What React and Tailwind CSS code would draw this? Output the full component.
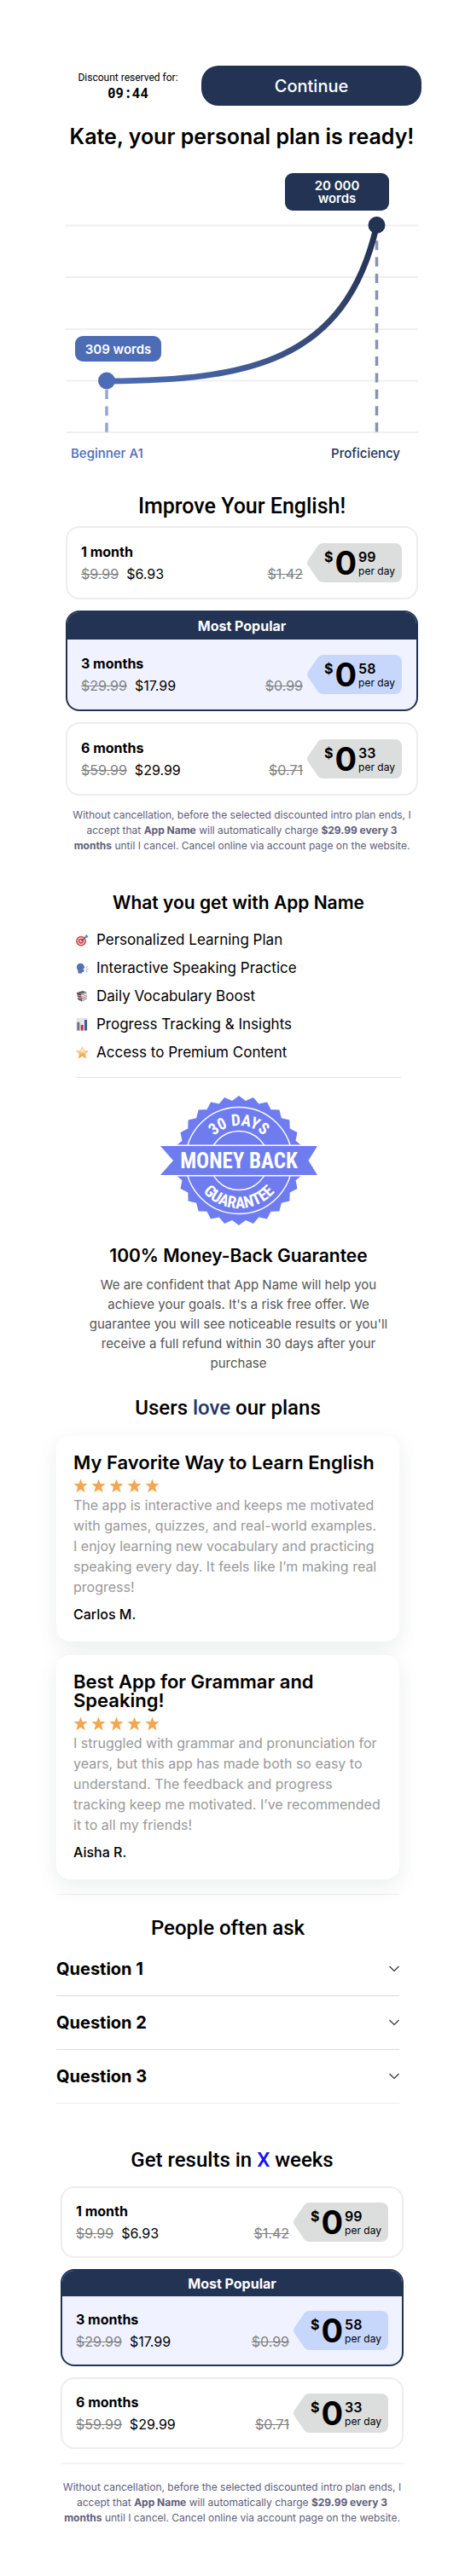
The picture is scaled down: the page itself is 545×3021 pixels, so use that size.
import React from 'react';

const PLANS = [
  { name: '1 month', was: '$9.99', now: '$6.93', dayWas: '$1.42', cents: '99' },
  { name: '3 months', was: '$29.99', now: '$17.99', dayWas: '$0.99', cents: '58', popular: true },
  { name: '6 months', was: '$59.99', now: '$29.99', dayWas: '$0.71', cents: '33' },
];

const REVIEWS = [
  {
    title: 'My Favorite Way to Learn English',
    text: 'The app is interactive and keeps me motivated with games, quizzes, and real-world examples. I enjoy learning new vocabulary and practicing speaking every day. It feels like I’m making real progress!',
    author: 'Carlos M.',
  },
  {
    title: 'Best App for Grammar and Speaking!',
    text: 'I struggled with grammar and pronunciation for years, but this app has made both so easy to understand. The feedback and progress tracking keep me motivated. I’ve recommended it to all my friends!',
    author: 'Aisha R.',
  },
];

function TargetIcon() {
  return (
    <svg viewBox="0 0 15 15" className="size-[15px] shrink-0" aria-hidden="true">
      <circle cx="6" cy="8.6" r="5.9" fill="#c9433f" />
      <circle cx="6" cy="8.6" r="4.3" fill="#f3dedd" />
      <circle cx="6" cy="8.6" r="3.1" fill="#c9433f" />
      <circle cx="6" cy="8.6" r="1.5" fill="#f3dedd" />
      <path d="M6 8.6 12 3.4" stroke="#3f4f80" strokeWidth="1.1" />
      <path d="M10.4 4.8 10.8 2.4 13 .8 13.2 2.4 14.8 2.8 13 4.8Z" fill="#5f7fc4" />
    </svg>
  );
}

function SpeakingIcon() {
  return (
    <svg viewBox="0 0 15 15" className="size-[15px] shrink-0" aria-hidden="true">
      <path
        d="M5.600 1.800C2.600 1.800.8 3.800.9 6.400c.1 2 1.200 2.800 1.500 4.200l.2 3h4.500l.2-1.700c1.500.2 2.300-.1 2.300-1.300l-.1-1.200-1.700-.6 1.900-.9-.1-1c.6-.1.9-.4.6-.9L9.400 5C9 2.900 7.600 1.800 5.600 1.800Z"
        fill="#5471b4"
      />
      <path d="M11.600 7.200 14 5.200M12 8.700h2.500M11.600 10.200 13.800 12" stroke="#7f97c8" strokeWidth=".9" />
    </svg>
  );
}

function BooksIcon() {
  return (
    <svg viewBox="0 0 15 15" className="size-[15px] shrink-0" aria-hidden="true">
      <path d="M1 3 8 1l4.500 1.400L6 4.800Z" fill="#5c6067" />
      <path d="M1 3 6 4.800v2L1.200 5.200Z" fill="#43474e" />
      <path d="M6 4.800l6.500-2.400v2L6 6.800Z" fill="#a9adb3" />
      <path d="M1.600 5.800 6.500 7.400l6.500-2v2.200L6.500 10 1.600 8Z" fill="#c0413d" />
      <path d="M6.500 8l6.300-2v1.200L6.500 9.300Z" fill="#eceef0" />
      <path d="M2 8.800l5 1.800 6-2.200v2.200L7 13.600l-4.500-2Z" fill="#54617d" />
      <path d="M7 11.200l6-2.200v1.300L7 12.700Z" fill="#dfe2e6" />
    </svg>
  );
}

function ChartIcon() {
  return (
    <svg viewBox="0 0 15 15" className="size-[15px] shrink-0" aria-hidden="true">
      <path d="M.5 0h13v14.500H.5Z" fill="#e3e6eb" />
      <path d="M1.300 4.800h3v9.700h-3Z" fill="#6f747c" />
      <path d="M5.700 8h3v6.500h-3Z" fill="#b8383d" />
      <path d="M10 2h3v12.500h-3Z" fill="#3d5aa6" />
    </svg>
  );
}

function StarIcon() {
  return (
    <svg viewBox="0 0 15 15" className="size-[15px] shrink-0" aria-hidden="true">
      <defs>
        <linearGradient id="star-fill" x1="0" y1="0" x2="0" y2="1">
          <stop offset=".3" stopColor="#fbf3e6" />
          <stop offset=".65" stopColor="#f0ae55" />
        </linearGradient>
      </defs>
      <path
        d="M7.500 1 9.400 5.200 14.300 5.700 10.700 9 11.700 13.900 7.500 11.500 3.300 13.900 4.300 9 .7 5.700 5.600 5.200Z"
        fill="url(#star-fill)"
        stroke="#f0b25e"
        strokeWidth=".8"
        strokeLinejoin="round"
      />
    </svg>
  );
}

const BENEFITS = [
  { icon: TargetIcon, label: 'Personalized Learning Plan' },
  { icon: SpeakingIcon, label: 'Interactive Speaking Practice' },
  { icon: BooksIcon, label: 'Daily Vocabulary Boost' },
  { icon: ChartIcon, label: 'Progress Tracking & Insights' },
  { icon: StarIcon, label: 'Access to Premium Content' },
];

function GrowthChart() {
  return (
    <svg viewBox="0 0 413 320" className="mt-[19px] block w-full" role="img" aria-label="Words known, from beginner to proficiency">
      <defs>
        <linearGradient id="curve" gradientUnits="userSpaceOnUse" x1="48" y1="0" x2="364" y2="0">
          <stop offset="0" stopColor="#4d6cb6" />
          <stop offset=".5" stopColor="#405b97" />
          <stop offset=".85" stopColor="#35456d" />
          <stop offset="1" stopColor="#223354" />
        </linearGradient>
      </defs>
      <path d="M0 69.500H413M0 130H413M0 191H413M0 251.500H413M0 312H413" stroke="#efefef" strokeWidth="2" />
      <path d="M48 262V312" stroke="#93a8d6" strokeWidth="3.500" strokeDasharray="11 8.400" />
      <path d="M364.500 87.200V312" stroke="#8d92ab" strokeWidth="3.500" strokeDasharray="11 8.400" />
      <path d="M48 252C213 251 328 230 364.500 69.500" fill="none" stroke="url(#curve)" strokeWidth="7" />
      <circle cx="48" cy="251.500" r="10" fill="#4d6cb6" />
      <circle cx="364.500" cy="69" r="10" fill="#223354" />
      <rect x="11" y="199" width="101" height="30" rx="9" fill="#4d6cb6" />
      <rect x="257" y="8" width="122" height="44" rx="9" fill="#223354" />
      <g fill="#fff" textAnchor="middle" className="font-['Inter',sans-serif] text-[15px] font-semibold">
        <text x="61.500" y="219.500">309 words</text>
        <text x="318" y="28">20 000</text>
        <text x="318" y="43">words</text>
      </g>
    </svg>
  );
}

function PriceTag({ cents, popular }) {
  return (
    <div className="flex h-[46px]">
      <svg viewBox="0 0 20 46" className={`h-[46px] w-5 ${popular ? 'fill-[#c7d7fc]' : 'fill-[#dcdedd]'}`} aria-hidden="true">
        <path d="M20 0H19C16 0 14 1 12.500 3L1.200 19.500C-.4 22-.4 24 1.200 26.500L12.500 43C14 45 16 46 19 46H20Z" />
      </svg>
      <div className={`flex rounded-r-lg pr-2 ${popular ? 'bg-[#c7d7fc]' : 'bg-[#dcdedd]'}`}>
        <span className="mt-1.5 text-base leading-5 font-bold">$</span>
        <span className="mx-0.5 text-[38px] leading-[46px] font-bold">0</span>
        <span className="mt-1.5 flex flex-col">
          <span className="text-base leading-5 font-semibold">{cents}</span>
          <span className="text-xs leading-[13px]">per day</span>
        </span>
      </div>
    </div>
  );
}

function PlanCard({ plan, compact }) {
  const { popular } = plan;
  return (
    <li className={`overflow-hidden rounded-2xl border-2 ${popular ? 'border-[#223354] bg-[#f0f3ff]' : 'border-[#ededed] bg-white'}`}>
      {popular && (
        <div className={`bg-[#223354] text-center font-bold text-white ${compact ? 'leading-[30px]' : 'leading-8'}`}>Most Popular</div>
      )}
      <div className={`flex items-center ${compact ? 'px-4 py-[17px]' : 'pr-[17px] pl-4 py-[18px]'}`}>
        <div className="flex flex-col gap-1.5 leading-5">
          <h3 className="font-bold">{plan.name}</h3>
          <p className="flex gap-[9px]">
            <s className="text-[#808080]">{plan.was}</s>
            <span>{plan.now}</span>
          </p>
        </div>
        <s className="mr-[5px] ml-auto self-end leading-5 text-[#808080]">{plan.dayWas}</s>
        <PriceTag cents={plan.cents} popular={popular} />
      </div>
    </li>
  );
}

function PlanList({ compact, className }) {
  return (
    <ul className={`flex flex-col gap-[13px] ${className}`}>
      {PLANS.map((plan) => (
        <PlanCard key={plan.name} plan={plan} compact={compact} />
      ))}
    </ul>
  );
}

function Disclaimer({ className }) {
  return (
    <p className={`text-center text-xs leading-[18px] text-[#5f5e7b] ${className}`}>
      Without cancellation, before the selected discounted intro plan ends, I accept that <b>App Name</b> will automatically charge{' '}
      <b>$29.99 every 3 months</b> until I cancel. Cancel online via account page on the website.
    </p>
  );
}

const TEETH = 28;
const SEAL_POINTS = Array.from({ length: TEETH * 2 }, (_, i) => {
  const angle = (i * Math.PI) / TEETH - Math.PI / 2;
  const radius = i % 2 ? 70.5 : 76;
  return `${(92 + radius * Math.cos(angle)).toFixed(2)},${(76 + radius * Math.sin(angle)).toFixed(2)}`;
}).join(' ');

function GuaranteeBadge() {
  return (
    <svg viewBox="0 0 184 152" className="mx-auto mt-[21px] block w-[184px]" role="img" aria-label="30 days money back guarantee">
      <defs>
        <path id="arc-top" d="M51 76A41 41 0 0 1 133 76" />
        <path id="arc-bottom" d="M36 76A56 56 0 0 0 148 76" />
      </defs>
      <polygon points={SEAL_POINTS} fill="#6e7cf0" />
      <circle cx="92" cy="76" r="62.500" fill="none" stroke="#fff" strokeWidth="1.400" />
      <circle cx="92" cy="76" r="34.500" fill="none" stroke="#fff" strokeWidth="1.400" />
      <path d="M14 57.500H170V94.500H14Z" fill="#fff" />
      <path d="M0 59H184L173.500 76 184 93H0L15 76Z" fill="#6e7cf0" />
      <g fill="#fff" textAnchor="middle" className="font-['Roboto_Condensed',sans-serif] font-bold">
        <text x="92" y="85" className="text-[25px]">
          MONEY BACK
        </text>
        <text className="text-[19px]">
          <textPath href="#arc-top" startOffset="50%">
            30 DAYS
          </textPath>
        </text>
        <text className="text-[19px]">
          <textPath href="#arc-bottom" startOffset="50%">
            GUARANTEE
          </textPath>
        </text>
      </g>
    </svg>
  );
}

function Rating() {
  return (
    <div className="mt-2 flex gap-1" role="img" aria-label="5 out of 5 stars">
      {[0, 1, 2, 3, 4].map((n) => (
        <svg key={n} viewBox="0 0 17 17" className="size-[17px] fill-[#f2a750]" aria-hidden="true">
          <path d="M8.500.6 10.600 6H16.600L11.900 9.700 13.600 16.200 8.500 12.700 3.400 16.200 5.100 9.700.4 6H6.400Z" />
        </svg>
      ))}
    </div>
  );
}

function Review({ review }) {
  return (
    <article className="rounded-2xl bg-white p-5 shadow-[0_8px_24px_rgba(40,50,70,0.09)]">
      <h3 className="text-[22px] leading-[22px] font-semibold">{review.title}</h3>
      <Rating />
      <p className="mt-0.5 leading-6 text-[#999]">{review.text}</p>
      <p className="mt-2 leading-6 font-medium">{review.author}</p>
    </article>
  );
}

function Question({ label }) {
  return (
    <li className="border-b border-[#dcdcdc] last:border-[#ececec]">
      <button type="button" className="flex w-full items-center justify-between py-[17px] text-xl leading-7 font-bold">
        {label}
        <svg viewBox="0 0 12 8" className="h-2 w-3 fill-none stroke-[#333]" aria-hidden="true">
          <path d="M.5 1 6 6.500 11.500 1" strokeWidth="1.200" />
        </svg>
      </button>
    </li>
  );
}

export default function App() {
  return (
    <main className="min-h-screen bg-white pt-[77px] pb-[59px] font-['Inter',sans-serif] text-base text-black">
      <header className="flex items-center gap-[26px] pr-[51px] pl-[90px]">
        <div className="w-[120px] text-center">
          <p className="font-['Roboto',sans-serif] text-xs leading-4 whitespace-nowrap">Discount reserved for:</p>
          <p className="font-['Roboto_Mono','DejaVu_Sans_Mono',monospace] leading-5 font-bold">09:44</p>
        </div>
        <button type="button" className="h-[47px] flex-1 rounded-[20px] bg-[#223354] text-xl font-medium text-white">
          Continue
        </button>
      </header>

      <section className="pr-[55px] pl-[77px]">
        <h1 className="mt-5 text-center text-[25px] leading-8 font-semibold whitespace-nowrap">Kate, your personal plan is ready!</h1>
        <GrowthChart />
        <div className="mt-[7px] flex justify-between pr-[21px] pl-1.5 text-[15px] leading-5 font-medium">
          <span className="text-[#4d6cb6]">Beginner A1</span>
          <span className="text-[#223354]">Proficiency</span>
        </div>
        <h2 className="mt-[37px] text-center font-['Roboto',sans-serif] text-[25px] leading-[30px] font-medium">Improve Your English!</h2>
        <PlanList className="mt-2" />
        <Disclaimer className="mt-[14px] px-1.5" />
      </section>

      <section className="mt-11 pr-[75px] pl-[89px] text-center">
        <h2 className="text-[21px] leading-7 font-semibold">What you get with App Name</h2>
        <ul className="mt-[17px] flex flex-col gap-[9px] border-b border-[#e6e6e6] pb-[17px] text-[17px] leading-6">
          {BENEFITS.map(({ icon: Icon, label }) => (
            <li key={label} className="flex items-center gap-[9px]">
              <Icon />
              {label}
            </li>
          ))}
        </ul>
        <GuaranteeBadge />
        <h2 className="mt-[22px] text-[21px] leading-7 font-semibold">100% Money-Back Guarantee</h2>
        <p className="mt-2 px-3 text-[15px] leading-[23px] text-[#555]">
          We are confident that App Name will help you achieve your goals. It's a risk free offer. We guarantee you will see noticeable
          results or you'll receive a full refund within 30 days after your purchase
        </p>
      </section>

      <section className="mt-[26px] pr-[77px] pl-[66px]">
        <h2 className="text-center font-['Roboto',sans-serif] text-2xl leading-[30px] font-medium">
          Users <span className="text-[#263763]">love</span> our plans
        </h2>
        <div className="mt-[18px] flex flex-col gap-4 border-b border-[#ededed] pb-[17px]">
          {REVIEWS.map((review) => (
            <Review key={review.author} review={review} />
          ))}
        </div>
        <h2 className="mt-6 text-center font-['Roboto',sans-serif] text-2xl leading-[30px] font-medium">People often ask</h2>
        <ul className="mt-0.5">
          <Question label="Question 1" />
          <Question label="Question 2" />
          <Question label="Question 3" />
        </ul>
      </section>

      <section className="mt-[51px] pr-[72px] pl-[71px]">
        <h2 className="text-center font-['Roboto',sans-serif] text-2xl leading-[30px] font-medium">
          Get results in <span className="text-[#1414f0]">X</span> weeks
        </h2>
        <PlanList compact className="mt-4 border-b-2 border-[#f3f3f3] pb-4" />
        <Disclaimer className="mt-[18px]" />
      </section>
    </main>
  );
}
